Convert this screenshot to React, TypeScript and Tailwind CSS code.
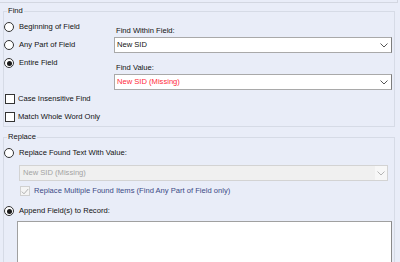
import React from 'react';

const FONT = { fontFamily: '"Liberation Sans", Arial, sans-serif' };

function Radio({ checked, label, className = '' }: { checked?: boolean; label: string; className?: string }) {
  return (
    <div className={`flex h-[18px] items-center ${className}`}>
      <span className="flex h-[10px] w-[10px] items-center justify-center rounded-full border border-[#333] bg-white">
        {checked && <span className="h-[5px] w-[5px] rounded-full bg-[#1a1a1a]" />}
      </span>
      <span className="ml-[5px] whitespace-nowrap">{label}</span>
    </div>
  );
}

function Check({ label }: { label: string }) {
  return (
    <div className="flex h-[18px] items-center">
      <span className="ml-[1px] h-[10px] w-[10px] border border-[#333] bg-white" />
      <span className="ml-[3px] whitespace-nowrap">{label}</span>
    </div>
  );
}

function Chevron({ color = '#555' }: { color?: string }) {
  return (
    <svg width="8" height="5" viewBox="0 0 8 5" className="shrink-0">
      <path d="M0.5 0.5 L4 4 L7.5 0.5" fill="none" stroke={color} strokeWidth="1" />
    </svg>
  );
}

function Combo({ value, red }: { value: string; red?: boolean }) {
  return (
    <div className="flex h-[16px] items-center border border-[#a9a9a9] border-r-[#7d7d7d] bg-white pl-[2px] pr-[3px]">
      <span className={red ? 'flex-1 text-[#ff2a3a]' : 'flex-1 text-[#111]'}>{value}</span>
      <Chevron />
    </div>
  );
}

export default function App() {
  return (
    <div
      className="h-[262px] w-[400px] overflow-hidden bg-[#e9edf8] text-[7.6px] leading-[10px] text-[#111]"
      style={FONT}
    >
      {/* corner of the panel above */}
      <div className="mr-[2px] h-[3px] border-b border-r border-[#d3d7e1]" />

      {/* Find */}
      <fieldset className="ml-[3px] mt-[3px] w-[392px] border border-[#d6dbe6]">
        <legend className="ml-[3px] px-[1px] leading-[10px]">Find</legend>
        <div className="flex">
          <div className="w-[110px] pt-[2px]">
            <Radio label="Beginning of Field" />
            <Radio label="Any Part of Field" />
            <Radio checked label="Entire Field" />
          </div>
          <div className="mr-[2px] flex-1 pt-[10px]">
            <div className="mb-[1px] pl-[2px]">Find Within Field:</div>
            <Combo value="New SID" />
            <div className="mb-[1px] mt-[10px] pl-[2px]">Find Value:</div>
            <Combo value="New SID (Missing)" red />
          </div>
        </div>
        <Check label="Case Insensitive Find" />
        <Check label="Match Whole Word Only" />
      </fieldset>

      {/* Replace */}
      <fieldset className="ml-[3px] mt-[5px] h-[140px] w-[392px] border border-[#d6dbe6]">
        <legend className="ml-[3px] px-[1px] leading-[10px]">Replace</legend>
        <div className="pt-[2px]">
          <Radio label="Replace Found Text With Value:" />
          <div className="ml-[15px] mr-[6px] mt-[3px] flex h-[16px] items-center border border-[#d3d3d3] bg-[#f0f0f0]">
            <span className="flex-1 pl-[3px] text-[#a3a3a3]">New SID (Missing)</span>
            <span className="flex h-full w-[12px] items-center justify-center bg-[#f7f7f7]">
              <Chevron color="#b5b5b5" />
            </span>
          </div>
          <div className="ml-[16px] mt-[1px] flex h-[18px] items-center">
            <span className="flex h-[10px] w-[10px] items-center justify-center border border-[#d0d0d0] bg-[#f4f4f4]">
              <svg width="8" height="7" viewBox="0 0 8 7">
                <path d="M0.8 3.6 L3 5.8 L7.2 1" fill="none" stroke="#b0b0b0" strokeWidth="1" />
              </svg>
            </span>
            <span className="ml-[4px] whitespace-nowrap text-[#3b4a85]">
              Replace Multiple Found Items (Find Any Part of Field only)
            </span>
          </div>
          <Radio checked label="Append Field(s) to Record:" className="mt-[2px]" />
          <div className="ml-[13px] mr-[2px] mt-[1px] h-[60px] border border-b-0 border-[#a0a0a0] border-r-[#8a8a8a] bg-white" />
        </div>
      </fieldset>
    </div>
  );
}
